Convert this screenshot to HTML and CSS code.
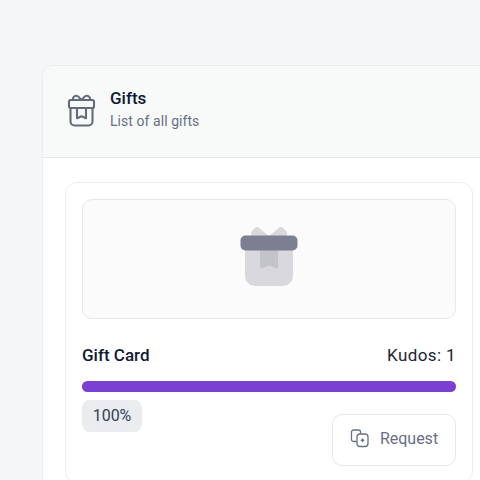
FILE: index.html
```html
<!DOCTYPE html>
<html lang="en">
<head>
<meta charset="utf-8">
<title>Gifts</title>
<link rel="stylesheet" href="styles.css">
</head>
<body>
<main class="panel">
  <header class="panel-head">
    <svg class="head-icon" width="30" height="34" viewBox="0 0 30 34" fill="none" stroke="#636c7b" stroke-width="2.100" stroke-linejoin="round" stroke-linecap="round">
      <rect x="2" y="6" width="25" height="8" rx="1.500"/>
      <path d="M3.500 14v13.500a4 4 0 0 0 4 4h14a4 4 0 0 0 4-4V14"/>
      <path d="M6 6V4.500C6 3 8 1.500 9.500 1.800 11.500 2.200 13.500 5 14.500 6 15.500 5 17.500 2.200 19.500 1.800 21 1.500 23 3 23 4.500V6"/>
      <path d="M10 14v10.200l4.500-2 4.500 2V14"/>
    </svg>
    <div class="head-text">
      <h1>Gifts</h1>
      <p>List of all gifts</p>
    </div>
  </header>
  <section class="panel-body">
    <article class="gift">
      <div class="gift-image">
        <svg width="58" height="66" viewBox="0 0 58 66">
          <path d="M5 20h48v30a10 10 0 0 1-10 10H15a10 10 0 0 1-10-10z" fill="#d8d8dd"/>
          <path d="M11 12V6l5-5h2l11 9 11-9h2l5 5v6z" fill="#d8d8dd"/>
          <path d="M20 20h18v20a2 2 0 0 1-3 2l-6-2.500-6 2.500a2 2 0 0 1-3-2z" fill="#c3c4c9"/>
          <rect x="0.500" y="9.500" width="57" height="15" rx="5" fill="#7c7f92"/>
        </svg>
      </div>
      <div class="gift-line">
        <h2>Gift Card</h2>
        <span class="kudos">Kudos: 1</span>
      </div>
      <div class="bar"><div class="bar-fill"></div></div>
      <div class="gift-foot">
        <span class="badge">100%</span>
        <button class="request" type="button">
          <svg width="20" height="20" viewBox="0 0 20 20" fill="none" stroke="#667080" stroke-width="1.300" stroke-linejoin="round" stroke-linecap="round">
            <path d="M6 13.500H3.500A2 2 0 0 1 1.500 11.500V4A2 2 0 0 1 3.500 2h5A2 2 0 0 1 10.500 4v1.500"/>
            <rect x="7" y="6" width="11" height="12.500" rx="3"/>
            <path d="M12.500 11v2.500M11.200 12.250h2.600"/>
          </svg>
          <span>Request</span>
        </button>
      </div>
    </article>
  </section>
</main>
</body>
</html>
```
FILE: styles.css
```css
* { box-sizing: border-box; }
html, body { height: 100%; }
body {
  margin: 0;
  width: 480px;
  height: 480px;
  overflow: hidden;
  background: #f5f6f8;
  font-family: Roboto, "Liberation Sans", sans-serif;
  color: #111827;
}
.panel {
  width: 460px;
  margin: 65px 0 0 42px;
  background: #fff;
  border: 1px solid #eaecf0;
  border-radius: 12px;
}
.panel-head {
  display: flex;
  align-items: center;
  gap: 13px;
  height: 92px;
  padding: 0 0 2px 24px;
  background: #f8f9f9;
  border-bottom: 1px solid #e5e7eb;
  border-radius: 12px 12px 0 0;
}
.head-text { margin-bottom: 4px; }
.head-text h1 {
  margin: 0;
  font-size: 17px;
  line-height: 22px;
  font-weight: 500;
  color: #111a33;
}
.head-text p {
  margin: 2px 0 0;
  font-size: 14px;
  line-height: 20px;
  letter-spacing: 0.06px;
  color: #667085;
}
.panel-body { padding: 24px 22px; }
.gift {
  width: 408px;
  padding: 16px;
  border: 1px solid #eaecf0;
  border-radius: 12px;
}
.gift-image {
  display: flex;
  align-items: center;
  justify-content: center;
  height: 120px;
  background: #fbfbfc;
  border: 1px solid #e5e7eb;
  border-radius: 10px;
}
.gift-line {
  display: flex;
  justify-content: space-between;
  align-items: center;
  margin-top: 25px;
  line-height: 22px;
}
.gift-line h2 {
  margin: 0;
  font-size: 17px;
  font-weight: 500;
  color: #111a33;
}
.kudos {
  font-size: 17px;
  letter-spacing: 0.4px;
  color: #1d2433;
}
.bar {
  height: 11px;
  margin-top: 15px;
  background: #e5e7eb;
  border-radius: 6px;
}
.bar-fill {
  height: 100%;
  width: 100%;
  background: #7b3fd1;
  border-radius: 6px;
}
.gift-foot {
  display: flex;
  justify-content: space-between;
  align-items: flex-start;
  margin-top: 8px;
}
.badge {
  width: 60px;
  height: 32px;
  display: flex;
  align-items: center;
  justify-content: center;
  padding-bottom: 2px;
  font-size: 16px;
  color: #344054;
  background: #eaecf0;
  border-radius: 8px;
}
.request {
  display: flex;
  align-items: center;
  justify-content: center;
  gap: 10px;
  width: 124px;
  height: 52px;
  margin-top: 14px;
  padding: 0 0 4px;
  font: inherit;
  font-size: 16px;
  color: #667085;
  background: #fff;
  border: 1px solid #e5e7eb;
  border-radius: 10px;
}
```
